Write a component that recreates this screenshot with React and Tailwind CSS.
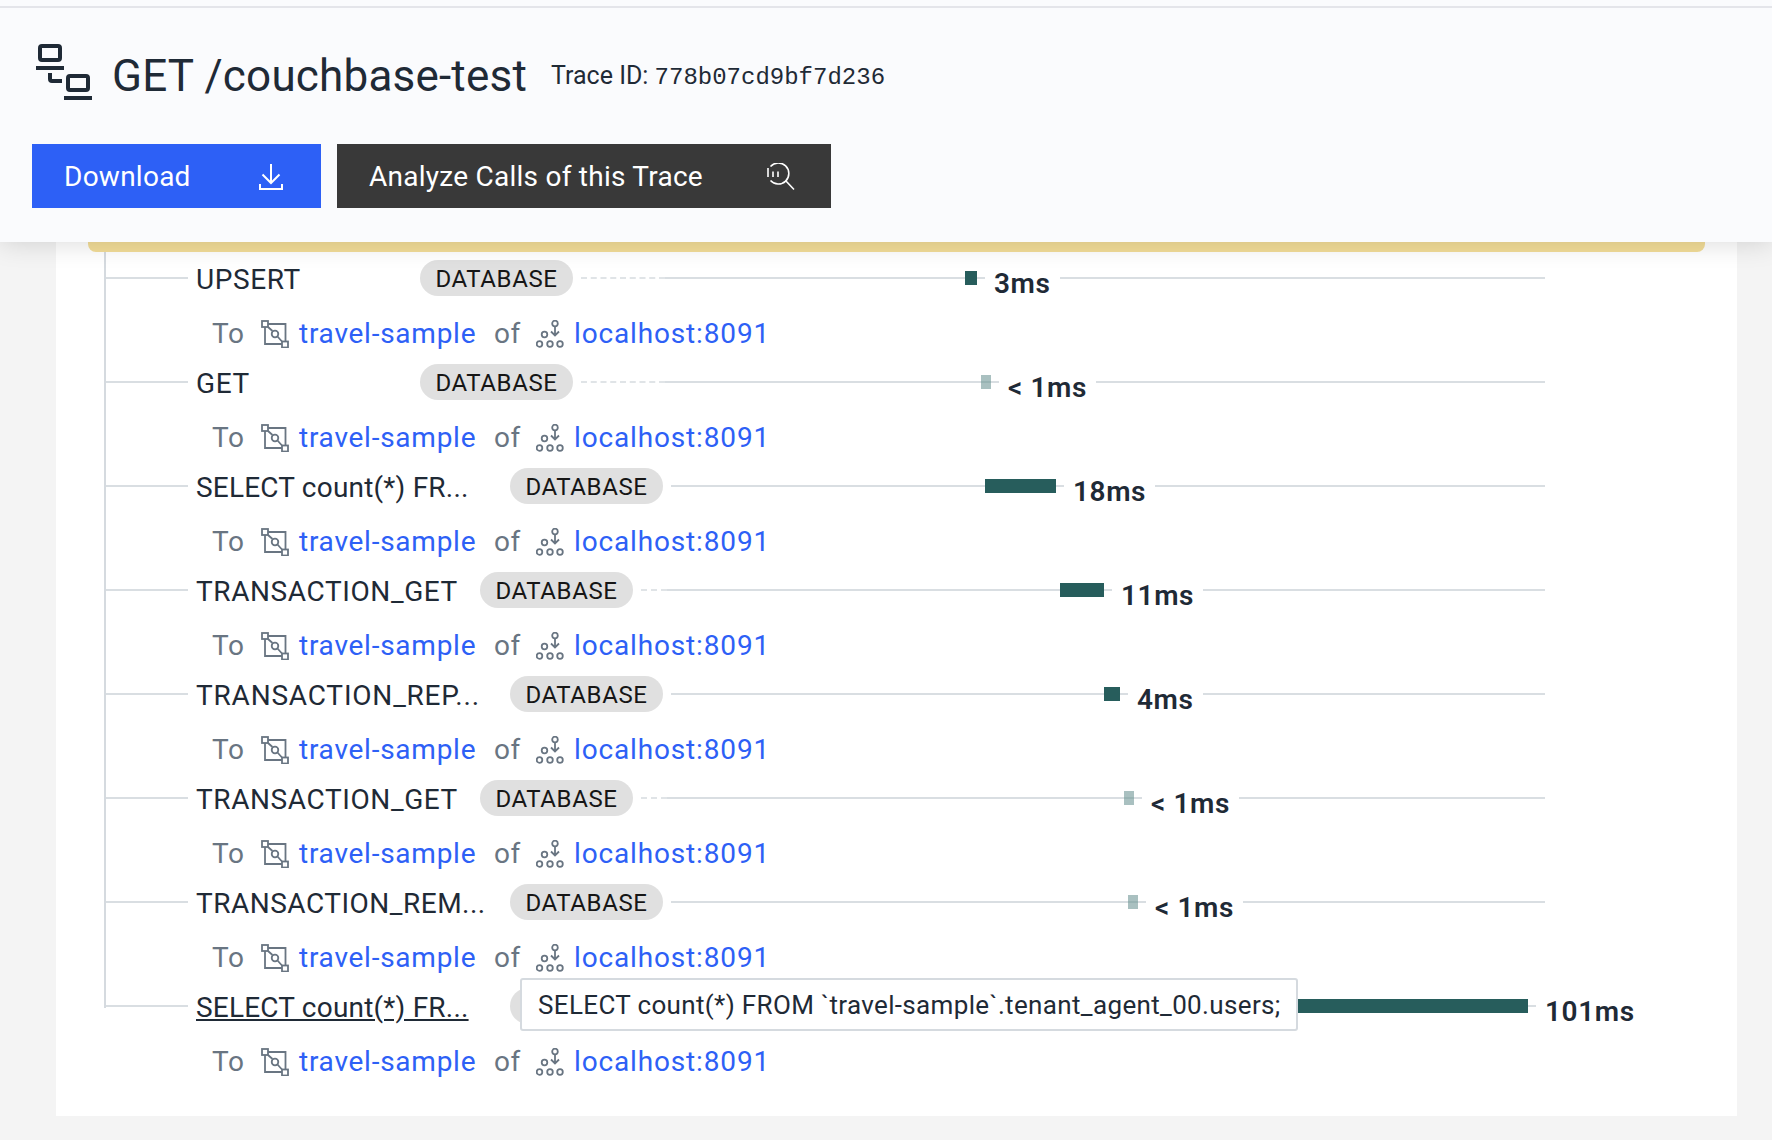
import React from 'react';

const spans = [
  { name: 'UPSERT', nameW: 232, dash: 84, lead: 384, barW: 12, time: '3ms' },
  { name: 'GET', nameW: 232, dash: 84, lead: 400, barW: 10, light: true, time: '< 1ms' },
  { name: 'SELECT count(*) FR...', track: 'tracking-[0.2px]', nameW: 322, dash: 0, lead: 314, barW: 71, time: '18ms' },
  { name: 'TRANSACTION_GET', nameW: 292, dash: 26, lead: 419, barW: 44, time: '11ms' },
  { name: 'TRANSACTION_REP...', track: 'tracking-[0.8px]', nameW: 322, dash: 0, lead: 433, barW: 16, time: '4ms' },
  { name: 'TRANSACTION_GET', nameW: 292, dash: 26, lead: 483, barW: 10, light: true, time: '< 1ms' },
  { name: 'TRANSACTION_REM...', track: 'tracking-[0.5px]', nameW: 322, dash: 0, lead: 457, barW: 10, light: true, time: '< 1ms' },
  { name: 'SELECT count(*) FR...', track: 'tracking-[0.2px]', nameW: 322, dash: 0, lead: 627, barW: 230, time: '101ms', last: true },
];

function TraceIcon() {
  return (
    <svg width="56" height="56" viewBox="0 0 56 56" fill="none" stroke="#1f2a36" strokeWidth="4" className="ml-[4px] mb-[8px] shrink-0">
      <rect x="4" y="2" width="20" height="14" rx="2" />
      <path d="M0 24h28M28 54h28M14 29v6a2 2 0 0 0 2 2h10" />
      <rect x="32" y="32" width="20" height="14" rx="2" />
    </svg>
  );
}

function DownloadIcon() {
  return (
    <svg width="26" height="28" viewBox="0 0 26 28" fill="none" stroke="white" strokeWidth="2" className="shrink-0">
      <path d="M13 1v19M4.5 11.5L13 20l8.500-8.500M2 21v5h22v-5" />
    </svg>
  );
}

function AnalyzeIcon() {
  return (
    <svg width="28" height="28" viewBox="0 0 28 28" fill="none" stroke="white" strokeWidth="1.6" className="shrink-0">
      <path d="M3.500 3.500A10.500 10.500 0 1 1 3.500 17.500" />
      <path d="M18.500 17.500L27 26.500" />
      <path d="M1 5v9M6 8.500V14M11 8.500V14" />
    </svg>
  );
}

function BucketIcon() {
  return (
    <svg width="28" height="28" viewBox="0 0 28 28" fill="none" stroke="#697582" strokeWidth="1.800" className="shrink-0">
      <rect x="1" y="1" width="6" height="6" />
      <rect x="21" y="21.500" width="6" height="6" />
      <path d="M7 4H24.500V21.500M21 24H4V7M7 7l4.500 4M16.500 16.500L21 21.500" />
      <circle cx="14" cy="14" r="3.300" />
    </svg>
  );
}

function NodesIcon() {
  return (
    <svg width="28" height="28" viewBox="0 0 28 28" fill="none" stroke="#697582" strokeWidth="1.800" className="shrink-0">
      <circle cx="19" cy="3.500" r="2.800" />
      <path d="M19 6.500V15.500M15 11.500L19 15.500L23 11.500" />
      <circle cx="8.500" cy="14.500" r="2.800" />
      <circle cx="3.500" cy="24" r="2.800" />
      <circle cx="14" cy="24" r="2.800" />
      <circle cx="24" cy="24" r="2.800" />
    </svg>
  );
}

function SpanRow({ span }) {
  return (
    <div className="h-[104px]">
      <div className="relative flex items-center h-[40px]">
        <div className="w-[82px] h-[2px] bg-[#d9dee2] shrink-0" />
        <div style={{ width: span.nameW }} className={`pl-[8px] pt-[3px] shrink-0 text-[#1f2a36] whitespace-nowrap ${span.track || ''}`}>
          <span className={span.last ? 'underline' : ''}>{span.name}</span>
        </div>
        <div className="h-[36px] w-[153px] pt-[2px] shrink-0 rounded-full bg-[#e0e0e0] flex items-center justify-center text-[24px] text-[#161616]">DATABASE</div>
        <div className="w-[8px] shrink-0" />
        {span.dash > 0 && <div style={{ width: span.dash }} className="shrink-0 border-t-2 border-dashed border-[#e0e4e7]" />}
        <div style={{ width: span.lead - span.dash }} className="h-[2px] bg-[#d9dee2] shrink-0" />
        {span.light ? (
          <div style={{ width: span.barW }} className="h-[14px] shrink-0 flex items-center bg-[#a9c0c0]">
            <div className="w-full h-[2px] bg-[#98b3b3]" />
          </div>
        ) : (
          <div style={{ width: span.barW }} className="h-[14px] shrink-0 bg-[#275d5c]" />
        )}
        <div className="w-[8px] h-[2px] bg-[#d9dee2] shrink-0" />
        <div className="px-[9px] shrink-0 mt-[12px] font-semibold text-[#1f2a36]">{span.time}</div>
        <div className="flex-1 h-[2px] bg-[#d9dee2]" />
        {span.last && (
          <div className="absolute left-[414px] top-[-8px] w-[778px] h-[53px] pt-[2px] bg-white border-2 border-[#d5dadf] rounded-[3px] pl-[16px] flex items-center text-[26px] tracking-[0.35px] text-[#1f2a36] whitespace-nowrap z-10">
            SELECT count(*) FROM `travel-sample`.tenant_agent_00.users;
          </div>
        )}
      </div>
      <div className="flex items-center h-[36px] mt-[18px] pl-[106px] text-[#697582] whitespace-nowrap">
        <span className="w-[49px]">To</span>
        <BucketIcon />
        <span className="ml-[10px] w-[177px] tracking-[0.75px] text-[#2d60f6]">travel-sample</span>
        <span className="ml-[18px] w-[42px]">of</span>
        <NodesIcon />
        <span className="ml-[10px] tracking-[0.85px] text-[#2d60f6]">localhost:8091</span>
      </div>
    </div>
  );
}

export default function App() {
  return (
    <div className="h-[1140px] overflow-hidden bg-[#f4f4f4] font-['Roboto',sans-serif] text-[28px] tracking-[0.6px]">
      <header className="relative z-20 h-[242px] bg-[#fafbfd] pt-[6px] shadow-[0_0_26px_rgba(0,0,0,0.16)]">
        <div className="border-t-2 border-[#e4e5ea] pl-[32px]">
          <div className="flex items-center h-[136px]">
            <TraceIcon />
            <h1 className="ml-[20px] text-[44px] tracking-[0.2px] text-[#1f2a36] whitespace-nowrap">GET /couchbase-test</h1>
            <span className="ml-[24px] text-[25px] tracking-normal text-[#1f2a36] whitespace-nowrap">Trace ID: <span className="font-['Liberation_Mono',monospace] text-[24px]">778b07cd9bf7d236</span></span>
          </div>
          <div className="flex gap-[16px] tracking-[0.25px]">
            <button className="w-[289px] h-[64px] pl-[32px] pr-[37px] pt-[1px] flex items-center justify-between bg-[#2d60f6] text-white">
              Download
              <DownloadIcon />
            </button>
            <button className="w-[494px] h-[64px] pl-[32px] pr-[36px] pt-[1px] flex items-center justify-between bg-[#393939] text-white">
              Analyze Calls of this Trace
              <AnalyzeIcon />
            </button>
          </div>
        </div>
      </header>
      <main className="ml-[56px] mr-[35px] h-[874px] bg-white">
        <div className="h-[10px] mx-[32px] bg-[#f3dd98] rounded-b-[8px]" />
        <div className="ml-[48px] mr-[192px] border-l-2 border-[#d5dadf] h-[756px] pt-[6px]">
          {spans.map((span, i) => <SpanRow key={i} span={span} />)}
        </div>
      </main>
    </div>
  );
}
